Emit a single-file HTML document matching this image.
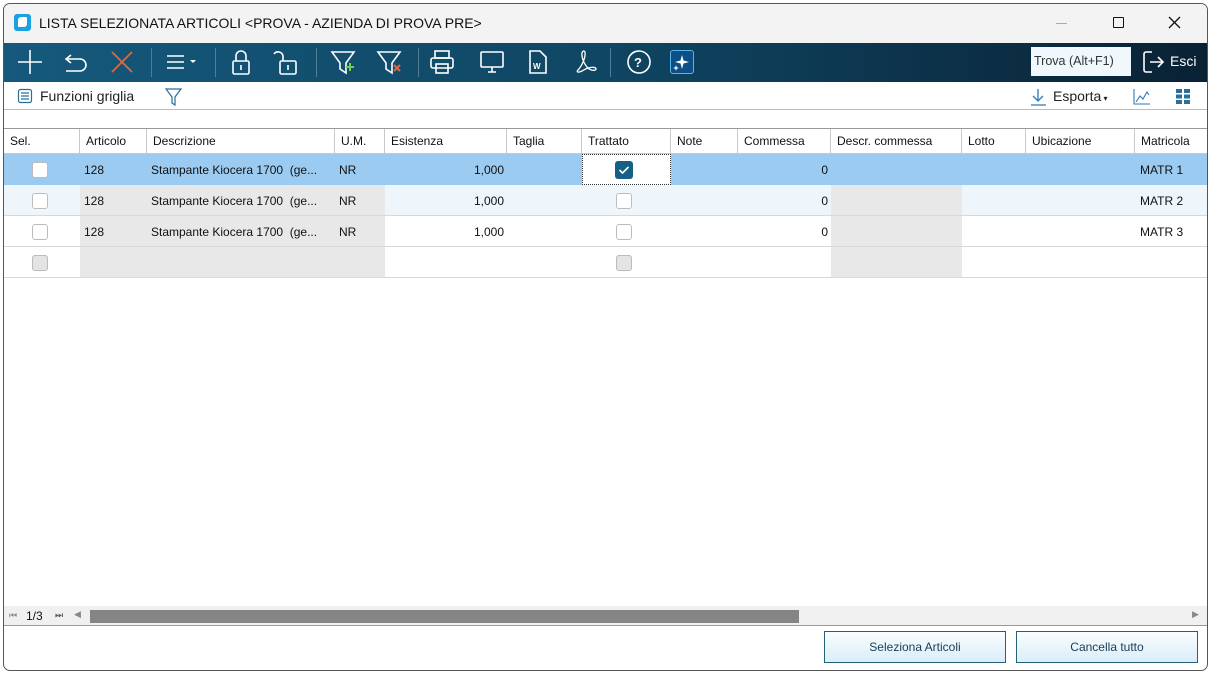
<!DOCTYPE html>
<html><head><meta charset="utf-8"><style>
*{margin:0;padding:0;box-sizing:border-box}
body{width:1211px;height:674px;background:#fff;font-family:"Liberation Sans",sans-serif;position:relative;overflow:hidden}
.win{position:absolute;left:3px;top:3px;width:1205px;height:668px;border:1px solid #555;border-radius:7px;background:#fff;overflow:hidden}
.title{position:absolute;left:0;top:0;width:100%;height:39px;background:#f3f3f3;font-size:14px;color:#111}
.tb{position:absolute;left:0;top:39px;width:100%;height:39px;background:linear-gradient(90deg,#15597c 0%,#0f4663 50%,#0a2134 100%)}
.ic{position:absolute;top:0}
.sep{position:absolute;top:5px;width:1px;height:29px;background:#4f7e98}
.tb2{position:absolute;left:0;top:78px;width:100%;height:28px;font-size:14px;color:#222;border-bottom:1px solid #bbb}
.grid{position:absolute;left:0;top:124px;width:100%;height:498px;border-top:1px solid #999}
.c{position:absolute;font-size:12px;color:#111;white-space:nowrap;overflow:hidden}
.h{position:absolute;top:0;height:25px;line-height:24px;padding-left:6px;border-right:1px solid #c8c8c8;border-bottom:1px solid #c8c8c8;font-size:12px;color:#111;background:#fff}
.row{position:absolute;left:0;width:100%;height:31px;border-bottom:1px solid #d8d8d8}
.cb{position:absolute;width:16px;height:16px;border:1px solid #bcbcbc;border-radius:3px;background:#fff}
.btn{position:absolute;top:627px;height:32px;border:1px solid #2a5d78;background:linear-gradient(#fafdff,#d9eef8);font-size:12px;color:#1a3b57;text-align:center;line-height:30px}
</style></head><body>
<div class="win">
<div class="title">
<div style="position:absolute;left:10px;top:10px;width:17px;height:17px;background:#1ba1e2;border-radius:3px"><div style="position:absolute;left:4px;top:3px;width:9px;height:10px;background:#fff;border-radius:3px 1px 3px 1px"></div></div>
<div style="position:absolute;left:35px;top:11px">LISTA SELEZIONATA ARTICOLI &lt;PROVA - AZIENDA DI PROVA PRE&gt;</div>
<div style="position:absolute;left:1052px;top:19px;width:11px;height:1px;background:#aaa"></div>
<div style="position:absolute;left:1109px;top:13px;width:11px;height:11px;border:1.3px solid #111;border-radius:1px"></div>
<svg style="position:absolute;left:1164px;top:12px" width="13" height="13"><path d="M1 1L12 12M12 1L1 12" stroke="#111" stroke-width="1.3"/></svg>
</div>
<div class="tb">
<svg class="ic" width="720" height="39" fill="none" stroke="#fff" stroke-width="1.6">
<path d="M14 19H38M26 7V31"/>
<path d="M67 12L62 16L67 20M62 16H76A6 6 0 0 1 76 28H62"/>
<path d="M108 9L128 29M128 9L108 29" stroke="#e0683a" stroke-width="1.8"/>
<path d="M163 13H180M163 19H180M163 25H180"/><path d="M186 17L192 17L189 20Z" fill="#fff" stroke="none"/>
<rect x="229" y="18" width="16" height="13" rx="1.5"/><path d="M232 18V13A5 5 0 0 1 242 13V18"/><path d="M237 22V27"/>
<rect x="276" y="18" width="16" height="13" rx="1.5"/><path d="M279 18V13A5 5 0 0 0 270 11"/><path d="M284 22V27"/>
<path d="M328 9H350L342 20V30L336 26V20Z"/><path d="M346 20V28M342 24H350" stroke="#6fd14a" stroke-width="2"/>
<path d="M374 9H396L388 20V30L382 26V20Z"/><path d="M390 22L396 28M396 22L390 28" stroke="#e0683a" stroke-width="2"/>
<rect x="431" y="8" width="14" height="7"/><rect x="427" y="15" width="22" height="10" rx="2"/><rect x="432" y="21" width="12" height="9"/>
<rect x="477" y="9" width="22" height="15" rx="1"/><path d="M484 29H492M488 24V29"/>
<path d="M526 8H536L542 14V30H526Z"/><text x="529" y="26" fill="#fff" stroke="none" font-size="8" font-family="Liberation Sans" font-weight="bold">W</text>
<path d="M580 8C576 8 578 18 583 24C586 28 592 28 592 26C592 23 584 24 578 28C574 30 572 29 574 27C577 24 582 15 581 9Z" stroke-width="1.3"/>
<circle cx="635" cy="19" r="11"/><text x="630" y="24" fill="#fff" stroke="none" font-size="13" font-family="Liberation Sans" font-weight="bold">?</text>
</svg>
<div class="sep" style="left:147px"></div><div class="sep" style="left:211px"></div><div class="sep" style="left:312px"></div><div class="sep" style="left:414px"></div><div class="sep" style="left:606px"></div>
<div style="position:absolute;left:666px;top:7px;width:24px;height:24px;border:1.5px solid #5ab4e8;border-radius:3px;background:#0b4f86"><svg width="21" height="21"><path d="M11 4L12.5 9.5L18 11L12.5 12.5L11 18L9.5 12.5L4 11L9.5 9.5Z" fill="#fff"/><path d="M5 14L5.7 16.3L8 17L5.7 17.7L5 20L4.3 17.7L2 17L4.3 16.3Z" fill="#fff"/></svg></div>
<div style="position:absolute;left:1027px;top:4px;width:100px;height:29px;background:#f0f8fe;font-size:12.5px;color:#333;line-height:29px;padding-left:3px">Trova (Alt+F1)</div>
<svg style="position:absolute;left:1138px;top:7px" width="26" height="24" fill="none" stroke="#fff" stroke-width="1.6"><path d="M10 2H4A2 2 0 0 0 2 4V20A2 2 0 0 0 4 22H10"/><path d="M8 12H21M16 7L21 12L16 17"/></svg>
<div style="position:absolute;left:1166px;top:10px;color:#fff;font-size:14px">Esci</div>
</div>
<div class="tb2">
<svg style="position:absolute;left:13px;top:6px" width="16" height="16" fill="none" stroke="#2b6e9a" stroke-width="1.2"><rect x="1.5" y="1.5" width="13" height="13" rx="2"/><path d="M4 5H12M4 8H12M4 11H12"/></svg>
<div style="position:absolute;left:36px;top:6px">Funzioni griglia</div>
<svg style="position:absolute;left:160px;top:5px" width="20" height="20" fill="none" stroke="#2b6e9a" stroke-width="1.2"><path d="M2 2H17L11 10V18L8 16V10Z"/></svg>
<svg style="position:absolute;left:1025px;top:5px" width="20" height="20" fill="none" stroke="#2b7ab8" stroke-width="1.3"><path d="M9 2V14M4 9L9 14L14 9M2 18H17"/></svg>
<div style="position:absolute;left:1049px;top:6px">Esporta<span style="font-size:8px"> ▾</span></div>
<svg style="position:absolute;left:1128px;top:5px" width="20" height="20" fill="none" stroke="#2b7ab8" stroke-width="1.1"><path d="M2 2V17H18M4 15L8 9L11 12L15 5L17 8"/></svg>
<svg style="position:absolute;left:1171px;top:6px" width="16" height="16" fill="#2b6e9a"><rect x="1" y="1" width="6" height="4"/><rect x="9" y="1" width="6" height="4"/><rect x="1" y="6.5" width="6" height="4"/><rect x="9" y="6.5" width="6" height="4"/><rect x="1" y="12" width="6" height="4"/><rect x="9" y="12" width="6" height="4"/></svg>
</div>
<div class="grid">
<div class="h" style="left:0;width:76px">Sel.</div>
<div class="h" style="left:76px;width:67px">Articolo</div>
<div class="h" style="left:143px;width:188px">Descrizione</div>
<div class="h" style="left:331px;width:50px">U.M.</div>
<div class="h" style="left:381px;width:122px">Esistenza</div>
<div class="h" style="left:503px;width:75px">Taglia</div>
<div class="h" style="left:578px;width:89px">Trattato</div>
<div class="h" style="left:667px;width:67px">Note</div>
<div class="h" style="left:734px;width:93px">Commessa</div>
<div class="h" style="left:827px;width:131px">Descr. commessa</div>
<div class="h" style="left:958px;width:64px">Lotto</div>
<div class="h" style="left:1022px;width:109px">Ubicazione</div>
<div class="h" style="left:1131px;width:80px;border-right:none">Matricola</div>
<div class="row" style="top:25px;background:#9ccbf2;border-bottom-color:#9ccbf2"></div>
<div style="position:absolute;left:578px;top:25px;width:89px;height:31px;background:#fff;border:1px dotted #333"></div>
<div style="position:absolute;left:611px;top:32px;width:18px;height:18px;background:#175f85;border-radius:3px"><svg width="18" height="18"><path d="M4.5 9L7.5 12L13.5 6" stroke="#fff" stroke-width="1.6" fill="none"/></svg></div>
<div class="row" style="top:56px;background:#eef6fc"></div>
<div class="row" style="top:87px;background:#fff"></div>
<div class="row" style="top:118px;background:#fff"></div>
<div style="position:absolute;left:76px;top:56px;width:305px;height:93px;background:#e8e8e8"></div>
<div style="position:absolute;left:827px;top:56px;width:131px;height:93px;background:#e8e8e8"></div>
<div style="position:absolute;left:0;top:86px;width:100%;height:1px;background:#d8d8d8"></div>
<div style="position:absolute;left:0;top:117px;width:100%;height:1px;background:#d8d8d8"></div>
<div style="position:absolute;left:0;top:148px;width:100%;height:1px;background:#d8d8d8"></div>
<div class="cb" style="left:28px;top:33px"></div><div class="cb" style="left:28px;top:64px"></div><div class="cb" style="left:28px;top:95px"></div><div class="cb" style="left:28px;top:126px;background:#e4e4e4"></div>
<div class="cb" style="left:612px;top:64px"></div><div class="cb" style="left:612px;top:95px"></div><div class="cb" style="left:612px;top:126px;background:#e4e4e4"></div>
<div class="c" style="left:80px;top:34px">128</div><div class="c" style="left:147px;top:34px">Stampante Kiocera 1700 &nbsp;(ge...</div><div class="c" style="left:335px;top:34px">NR</div><div class="c" style="left:381px;top:34px;width:119px;text-align:right">1,000</div><div class="c" style="left:734px;top:34px;width:90px;text-align:right">0</div><div class="c" style="left:1136px;top:34px">MATR 1</div>
<div class="c" style="left:80px;top:65px">128</div><div class="c" style="left:147px;top:65px">Stampante Kiocera 1700 &nbsp;(ge...</div><div class="c" style="left:335px;top:65px">NR</div><div class="c" style="left:381px;top:65px;width:119px;text-align:right">1,000</div><div class="c" style="left:734px;top:65px;width:90px;text-align:right">0</div><div class="c" style="left:1136px;top:65px">MATR 2</div>
<div class="c" style="left:80px;top:96px">128</div><div class="c" style="left:147px;top:96px">Stampante Kiocera 1700 &nbsp;(ge...</div><div class="c" style="left:335px;top:96px">NR</div><div class="c" style="left:381px;top:96px;width:119px;text-align:right">1,000</div><div class="c" style="left:734px;top:96px;width:90px;text-align:right">0</div><div class="c" style="left:1136px;top:96px">MATR 3</div>
<div style="position:absolute;left:0;top:477px;width:100%;height:20px;background:#f0f0f0;border-bottom:1px solid #999"></div>
<div class="c" style="left:5px;top:481px;font-size:9px;color:#888">⏮</div>
<div class="c" style="left:22px;top:480px">1/3</div>
<div class="c" style="left:51px;top:481px;font-size:9px;color:#555">⏭</div>
<div class="c" style="left:70px;top:480px;font-size:9px;color:#888">◀</div>
<div style="position:absolute;left:86px;top:481px;width:709px;height:13px;background:#858585"></div>
<div class="c" style="left:1188px;top:480px;font-size:9px;color:#888">▶</div>
</div>
<div class="btn" style="left:820px;width:182px">Seleziona Articoli</div>
<div class="btn" style="left:1012px;width:182px">Cancella tutto</div>
</div>
</body></html>
